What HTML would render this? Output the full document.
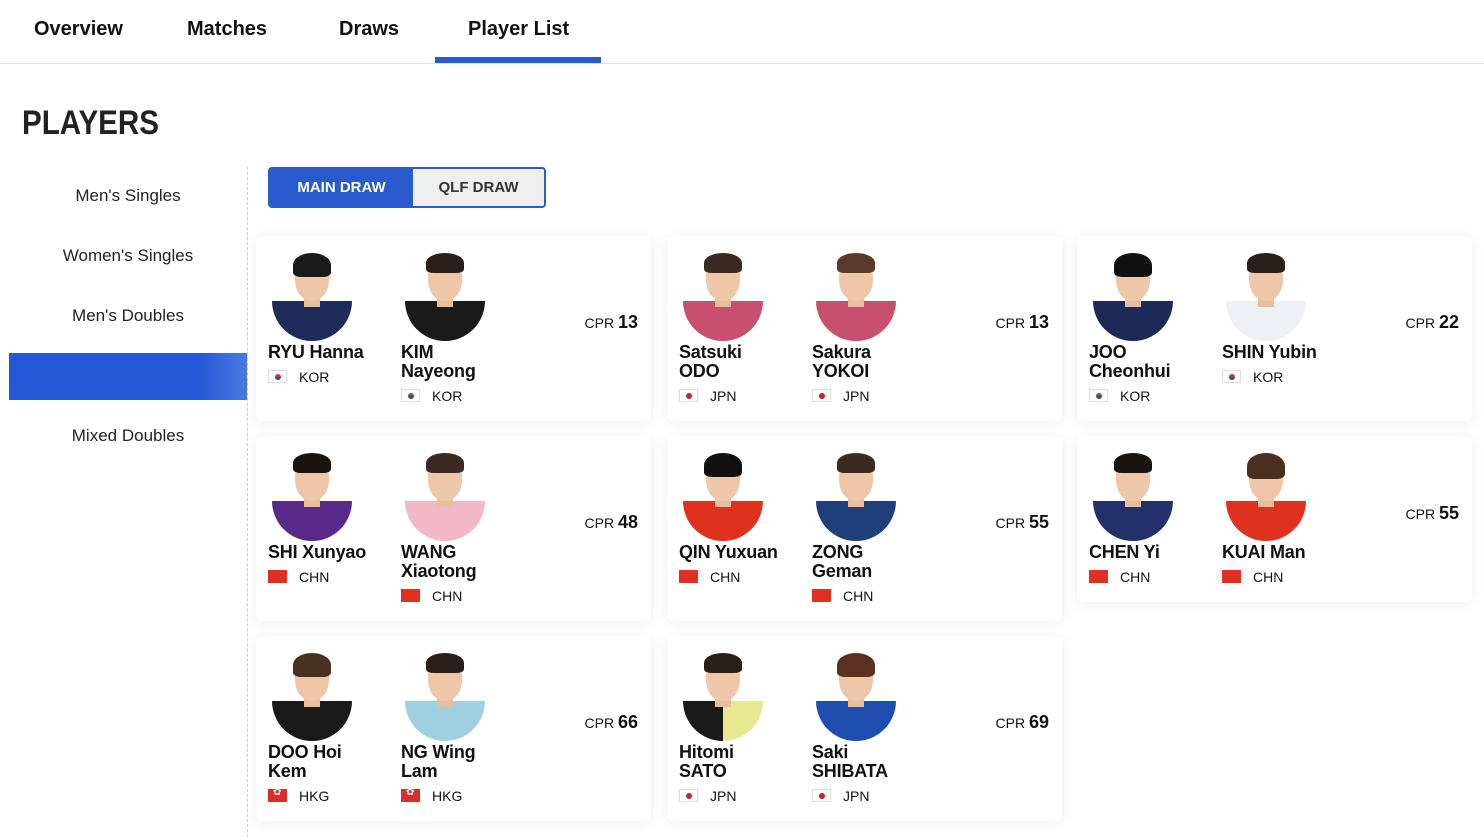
<!DOCTYPE html>
<html><head><meta charset="utf-8"><style>
*{margin:0;padding:0;box-sizing:border-box}
body{width:1484px;height:836px;background:#fff;font-family:"Liberation Sans",Arial,sans-serif;color:#111;position:relative;overflow:hidden}
.nav{position:absolute;top:18px;font-size:20px;font-weight:bold;color:#111}
.line{position:absolute;left:0;top:63px;width:1484px;height:1px;background:#e2e2e2}
.ul{position:absolute;left:435px;top:57px;width:166px;height:6px;background:#2a5bcc}
h1{position:absolute;left:22px;top:104px;font-size:34px;font-weight:900;color:#222;transform:scaleX(0.87);transform-origin:left}
.side{position:absolute;left:9px;width:238px;text-align:center;font-size:17px;color:#222}
.sel{position:absolute;left:9px;top:353px;width:238px;height:47px;background:linear-gradient(90deg,#2558d6 80%,#4d7ae0 100%)}
.dash{position:absolute;left:247px;top:167px;width:0;height:670px;border-left:1px dashed #ccc}
.tog{position:absolute;left:268px;top:167px;width:278px;height:41px;border:2px solid #2a5bcc;border-radius:4px;overflow:hidden;display:flex;font-size:15px;font-weight:bold}
.tog div{display:flex;align-items:center;justify-content:center}
.card{position:absolute;width:395px;height:185px;background:#fff;border-radius:6px;box-shadow:0 2px 14px rgba(0,0,0,0.07)}
.p{position:absolute;top:0;width:130px}
.av{position:absolute;top:17px;left:4px;width:80px;height:88px}
.jr{position:absolute;left:0;bottom:0;width:80px;height:40px;border-radius:0 0 40px 40px/0 0 40px 40px;overflow:hidden}
.hd{position:absolute;left:23px;top:4px;width:34px;height:44px;border-radius:45% 45% 48% 48%;background:#edc7a8}
.hr{position:absolute;left:21px;top:0;width:38px;height:20px;border-radius:50% 50% 20% 20%}
.nk{position:absolute;left:32px;top:42px;width:16px;height:12px;background:#e8bf9e}
.nm{position:absolute;left:0;top:107px;font-size:18px;font-weight:bold;line-height:19px;color:#111;white-space:nowrap;letter-spacing:-0.2px}
.fl{position:absolute;left:0;width:19px;height:13px;font-size:14px}
.cc{position:absolute;left:31px;font-size:14px;line-height:14px}
.cpr{position:absolute;right:13px;font-size:14px}
.cpr b{font-size:18px}
.kor{background:#fff;border:1px solid #ddd}
.kor::after{content:"";position:absolute;left:6px;top:3px;width:6px;height:6px;border-radius:50%;background:linear-gradient(#c33 50%,#2a4aa0 50%)}
.jpn{background:#fff;border:1px solid #ddd}
.jpn::after{content:"";position:absolute;left:6px;top:3px;width:6px;height:6px;border-radius:50%;background:#c22}
.chn{background:#e03020}
.hkg{background:#de2c2c}
.hkg::after{content:"✿";position:absolute;left:5px;top:-2px;color:#fff;font-size:10px}
</style></head><body>
<div class="nav" style="left:34px">Overview</div>
<div class="nav" style="left:187px">Matches</div>
<div class="nav" style="left:339px">Draws</div>
<div class="nav" style="left:468px">Player List</div>
<div class="line"></div><div class="ul"></div>
<h1>PLAYERS</h1>
<div class="side" style="top:186px">Men's Singles</div>
<div class="side" style="top:246px">Women's Singles</div>
<div class="side" style="top:306px">Men's Doubles</div>
<div class="sel"></div>
<div class="side" style="top:426px">Mixed Doubles</div>
<div class="dash"></div>
<div class="tog"><div style="width:143px;background:#2a5bcc;color:#fff">MAIN DRAW</div><div style="flex:1;background:#efefef;color:#333">QLF DRAW</div></div>

<div class="card" style="left:256px;top:236px">
 <div class="p" style="left:12px"><div class="av"><div class="jr" style="background:#1e2a5a"></div><div class="nk"></div><div class="hd"></div><div class="hr" style="background:#1a1a1a;height:24px"></div></div><div class="nm">RYU Hanna</div><div class="fl kor" style="top:134px"></div><div class="cc" style="top:134px">KOR</div></div>
 <div class="p" style="left:145px"><div class="av"><div class="jr" style="background:#1a1a1a"></div><div class="nk"></div><div class="hd"></div><div class="hr" style="background:#2a1e18"></div></div><div class="nm">KIM<br>Nayeong</div><div class="fl kor" style="top:153px"></div><div class="cc" style="top:153px">KOR</div></div>
 <div class="cpr" style="top:76px">CPR <b>13</b></div>
</div>
<div class="card" style="left:667px;top:236px">
 <div class="p" style="left:12px"><div class="av"><div class="jr" style="background:#c8506e"></div><div class="nk"></div><div class="hd"></div><div class="hr" style="background:#3a2a22"></div></div><div class="nm">Satsuki<br>ODO</div><div class="fl jpn" style="top:153px"></div><div class="cc" style="top:153px">JPN</div></div>
 <div class="p" style="left:145px"><div class="av"><div class="jr" style="background:#c8506e"></div><div class="nk"></div><div class="hd"></div><div class="hr" style="background:#5a3a2a"></div></div><div class="nm">Sakura<br>YOKOI</div><div class="fl jpn" style="top:153px"></div><div class="cc" style="top:153px">JPN</div></div>
 <div class="cpr" style="top:76px">CPR <b>13</b></div>
</div>
<div class="card" style="left:1077px;top:236px">
 <div class="p" style="left:12px"><div class="av"><div class="jr" style="background:#1d2a58"></div><div class="nk"></div><div class="hd"></div><div class="hr" style="background:#111;height:24px"></div></div><div class="nm">JOO<br>Cheonhui</div><div class="fl kor" style="top:153px"></div><div class="cc" style="top:153px">KOR</div></div>
 <div class="p" style="left:145px"><div class="av"><div class="jr" style="background:#eef0f6"></div><div class="nk"></div><div class="hd"></div><div class="hr" style="background:#2a1e18"></div></div><div class="nm">SHIN Yubin</div><div class="fl kor" style="top:134px"></div><div class="cc" style="top:134px">KOR</div></div>
 <div class="cpr" style="top:76px">CPR <b>22</b></div>
</div>

<div class="card" style="left:256px;top:436px">
 <div class="p" style="left:12px"><div class="av"><div class="jr" style="background:#5a2a8a"></div><div class="nk"></div><div class="hd"></div><div class="hr" style="background:#1a1410"></div></div><div class="nm">SHI Xunyao</div><div class="fl chn" style="top:134px"></div><div class="cc" style="top:134px">CHN</div></div>
 <div class="p" style="left:145px"><div class="av"><div class="jr" style="background:#f2b8c8"></div><div class="nk"></div><div class="hd"></div><div class="hr" style="background:#3a2a22"></div></div><div class="nm">WANG<br>Xiaotong</div><div class="fl chn" style="top:153px"></div><div class="cc" style="top:153px">CHN</div></div>
 <div class="cpr" style="top:76px">CPR <b>48</b></div>
</div>
<div class="card" style="left:667px;top:436px">
 <div class="p" style="left:12px"><div class="av"><div class="jr" style="background:#e0301e"></div><div class="nk"></div><div class="hd"></div><div class="hr" style="background:#111;height:24px"></div></div><div class="nm">QIN Yuxuan</div><div class="fl chn" style="top:134px"></div><div class="cc" style="top:134px">CHN</div></div>
 <div class="p" style="left:145px"><div class="av"><div class="jr" style="background:#1e3f7a"></div><div class="nk"></div><div class="hd"></div><div class="hr" style="background:#3a2a22"></div></div><div class="nm">ZONG<br>Geman</div><div class="fl chn" style="top:153px"></div><div class="cc" style="top:153px">CHN</div></div>
 <div class="cpr" style="top:76px">CPR <b>55</b></div>
</div>
<div class="card" style="left:1077px;top:436px;height:166px">
 <div class="p" style="left:12px"><div class="av"><div class="jr" style="background:#23306a"></div><div class="nk"></div><div class="hd"></div><div class="hr" style="background:#1a1410"></div></div><div class="nm">CHEN Yi</div><div class="fl chn" style="top:134px"></div><div class="cc" style="top:134px">CHN</div></div>
 <div class="p" style="left:145px"><div class="av"><div class="jr" style="background:#e0301e"></div><div class="nk"></div><div class="hd"></div><div class="hr" style="background:#4a2e20;height:26px"></div></div><div class="nm">KUAI Man</div><div class="fl chn" style="top:134px"></div><div class="cc" style="top:134px">CHN</div></div>
 <div class="cpr" style="top:67px">CPR <b>55</b></div>
</div>

<div class="card" style="left:256px;top:636px">
 <div class="p" style="left:12px"><div class="av"><div class="jr" style="background:#1a1a1a"></div><div class="nk"></div><div class="hd"></div><div class="hr" style="background:#4a3020;height:24px"></div></div><div class="nm">DOO Hoi<br>Kem</div><div class="fl hkg" style="top:153px"></div><div class="cc" style="top:153px">HKG</div></div>
 <div class="p" style="left:145px"><div class="av"><div class="jr" style="background:#9fd0e0"></div><div class="nk"></div><div class="hd"></div><div class="hr" style="background:#2a1e18"></div></div><div class="nm">NG Wing<br>Lam</div><div class="fl hkg" style="top:153px"></div><div class="cc" style="top:153px">HKG</div></div>
 <div class="cpr" style="top:76px">CPR <b>66</b></div>
</div>
<div class="card" style="left:667px;top:636px">
 <div class="p" style="left:12px"><div class="av"><div class="jr" style="background:linear-gradient(90deg,#1a1a1a 50%,#e8e890 50%)"></div><div class="nk"></div><div class="hd"></div><div class="hr" style="background:#2a1e18"></div></div><div class="nm">Hitomi<br>SATO</div><div class="fl jpn" style="top:153px"></div><div class="cc" style="top:153px">JPN</div></div>
 <div class="p" style="left:145px"><div class="av"><div class="jr" style="background:#1e4fb0"></div><div class="nk"></div><div class="hd"></div><div class="hr" style="background:#5a3020;height:24px"></div></div><div class="nm">Saki<br>SHIBATA</div><div class="fl jpn" style="top:153px"></div><div class="cc" style="top:153px">JPN</div></div>
 <div class="cpr" style="top:76px">CPR <b>69</b></div>
</div>
</body></html>
